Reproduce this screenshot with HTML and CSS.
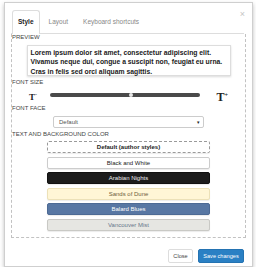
FILE: index.html
```html
<!DOCTYPE html>
<html>
<head>
    <title>Reader settings</title>
    <meta charset="utf-8">
    <link rel="stylesheet" href="styles.css">
</head>
<body>
    <div class="modal">
        <span class="close-x">&times;</span>
        <div class="tabs">
            <div class="tab active">Style</div>
            <div class="tab">Layout</div>
            <div class="tab">Keyboard shortcuts</div>
        </div>
        <div class="panel">
            <div class="label">Preview</div>
            <div class="preview">
                Lorem ipsum dolor sit amet, consectetur adipiscing elit.<br>
                Vivamus neque dui, congue a suscipit non, feugiat eu urna.<br>
                Cras in felis sed orci aliquam sagittis.
            </div>
            <div class="label">Font size</div>
            <div class="size-row">
                <span class="t-small">T<sup>-</sup></span>
                <div class="slider"><span class="thumb"></span></div>
                <span class="t-big">T<sup>+</sup></span>
            </div>
            <div class="label">Font face</div>
            <div class="select">
                <span>Default</span>
                <span class="arrow">&#9662;</span>
            </div>
            <div class="label">Text and background color</div>
            <div class="themes">
                <div class="theme default">Default (author styles)</div>
                <div class="theme bw">Black and White</div>
                <div class="theme nights">Arabian Nights</div>
                <div class="theme sands">Sands of Dune</div>
                <div class="theme blues">Balard Blues</div>
                <div class="theme mist">Vancouver Mist</div>
            </div>
        </div>
        <div class="footer">
            <button class="btn close">Close</button>
            <button class="btn primary">Save changes</button>
        </div>
    </div>
</body>
</html>
```

FILE: styles.css
```css
*{
    padding: 0;
    margin: 0;
    box-sizing: border-box;
    font-family: 'Liberation Sans', Arial, sans-serif;
}
body{
    background: #ffffff;
}
.modal{
    position: relative;
    width: 249px;
    height: 265px;
    margin: 2px 0 0 4px;
    padding: 7px 6px 0 6px;
    border: 1px solid #cfcfcf;
    background: #ffffff;
    box-shadow: 0 2px 4px rgba(0,0,0,0.25);
}
.close-x{
    position: absolute;
    top: 6px;
    right: 7px;
    font-size: 9px;
    color: #c4c4c4;
}
.tabs{
    display: flex;
    gap: 3px;
    height: 24px;
    padding-left: 1px;
    border-bottom: 1px solid #dddddd;
    margin-right: 2px;
}
.tab{
    height: 24px;
    line-height: 22px;
    padding: 0 5px;
    font-size: 6.5px;
    color: #888888;
    border: 1px solid transparent;
    border-bottom: 0;
}
.tab.active{
    color: #222222;
    font-weight: 700;
    background: #ffffff;
    border-color: #dddddd;
    border-radius: 3px 3px 0 0;
    height: 24px;
}
.panel{
    display: flex;
    flex-direction: column;
    width: 235px;
    height: 204px;
    border: 1px dashed #c2c2c2;
    border-top: 0;
}
.label{
    font-size: 6px;
    line-height: 7px;
    color: #444444;
    text-transform: uppercase;
    margin-top: 3px;
}
.label:first-child{
    margin-top: 0;
}
.preview{
    width: 204px;
    height: 31px;
    margin: 4px auto 0;
    padding: 1.5px 3px 0;
    border: 1px solid #dddddd;
    box-shadow: 0 1px 2px rgba(0,0,0,0.15);
    font-size: 6.8px;
    line-height: 9.5px;
    font-weight: 700;
    color: #1a1a1a;
    white-space: nowrap;
}
.size-row{
    display: flex;
    align-items: center;
    justify-content: center;
    height: 12px;
    margin-top: 3px;
    margin-bottom: 1px;
}
.t-small, .t-big{
    font-family: 'Liberation Serif', serif;
    font-weight: 700;
    color: #222222;
    line-height: 12px;
}
.t-small{
    font-size: 9px;
    width: 20px;
}
.t-big{
    font-size: 12px;
    width: 20px;
    text-align: right;
}
.t-small sup, .t-big sup{
    font-family: 'Liberation Sans', sans-serif;
    font-size: 6px;
    font-weight: 400;
}
.slider{
    position: relative;
    width: 150px;
    height: 4px;
    margin: 0 8px 0 1px;
    background: #4a4a4a;
    border-radius: 2px;
}
.thumb{
    position: absolute;
    left: 79px;
    top: 0;
    width: 4px;
    height: 4px;
    border-radius: 50%;
    background: #e8e8e8;
}
.select{
    display: flex;
    justify-content: space-between;
    align-items: center;
    width: 151px;
    height: 12px;
    margin: 4px auto 0;
    padding: 0 3px 0 5px;
    border: 1px solid #cccccc;
    border-radius: 2px;
    font-size: 6px;
    color: #555555;
}
.arrow{
    font-size: 5px;
    color: #222222;
}
.themes{
    display: flex;
    flex-direction: column;
    align-items: center;
    gap: 3.6px;
    margin-top: 3px;
}
.theme{
    width: 163px;
    height: 12px;
    line-height: 10px;
    border: 1px solid #cccccc;
    border-radius: 2px;
    text-align: center;
    font-size: 6px;
    color: #222222;
    box-shadow: 0 1px 1px rgba(0,0,0,0.08);
}
.theme.default{
    border: 1px dashed #9a9a9a;
    font-weight: 700;
}
.theme.nights{
    background: #1c1c1c;
    border-color: #111111;
    color: #eeeeee;
}
.theme.sands{
    background: #fff6d6;
    border-color: #ece1b8;
    color: #6d5d3c;
}
.theme.blues{
    background: #5877a3;
    border-color: #4d6a94;
    color: #ffffff;
}
.theme.mist{
    background: #e6e6e2;
    border-color: #c9c9c5;
    color: #66768a;
}
.footer{
    display: flex;
    justify-content: flex-end;
    gap: 5px;
    margin-top: 11px;
    margin-right: 2px;
}
.btn{
    height: 14px;
    padding: 0;
    border: 1px solid #dddddd;
    border-radius: 2px;
    background: #ffffff;
    font-size: 5.6px;
    color: #444444;
    text-align: center;
}
.btn.close{
    width: 25px;
}
.btn.primary{
    width: 46px;
    background: #2a80c4;
    border-color: #2473b2;
    color: #ffffff;
}
```
